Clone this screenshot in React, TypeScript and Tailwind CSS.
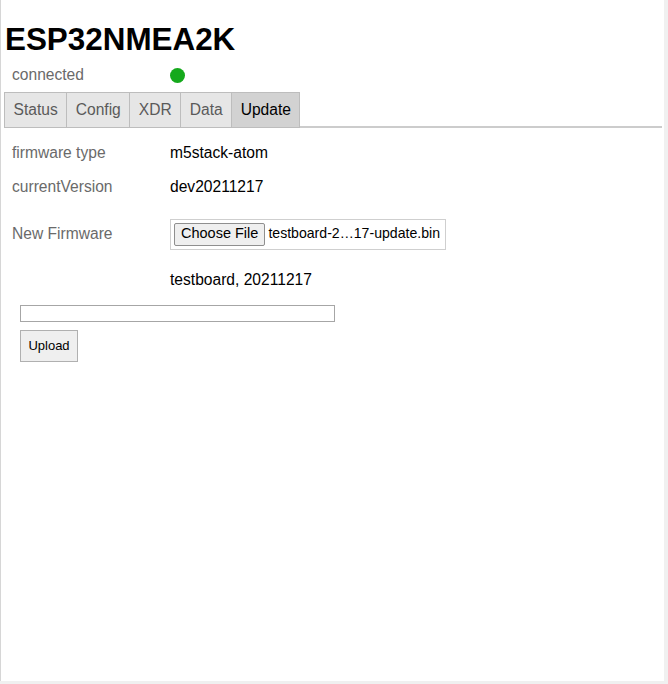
import React from "react";

const font = { fontFamily: '"Liberation Sans", Arial, sans-serif' };

function Tab({ label, active }: { label: string; active?: boolean }) {
  return (
    <div
      className={
        "-ml-px flex h-[36px] items-center border border-[#bdbdbd] px-[8.5px] text-[15.6px] first:ml-0 " +
        (active ? "bg-[#d2d2d2] text-black" : "bg-[#e6e6e6] text-[#5a5a5a]")
      }
    >
      {label}
    </div>
  );
}

function Row({ label, children, className }: { label: string; children?: React.ReactNode; className?: string }) {
  return (
    <div className={"flex h-[34px] items-center " + (className || "")}>
      <div className="w-[169px] shrink-0 pl-[11px] text-[#6a6a6a]">{label}</div>
      <div className="shrink-0 whitespace-nowrap text-black">{children}</div>
    </div>
  );
}

export default function App() {
  return (
    <div className="flex h-[684px] w-[668px] bg-[#f0f0f0]" style={font}>
      <div className="h-[681px] w-[664px] border-l border-[#d6d6d6] bg-white">
        <h1 className="pl-[4px] pt-[22px] text-[31.4px] font-bold leading-[36px] text-black">ESP32NMEA2K</h1>
        <div className="mt-[6px] flex h-[22px] items-center text-[15.6px]">
          <div className="w-[169px] pl-[11px] text-[#6a6a6a]">connected</div>
          <div className="h-[15px] w-[15px] rounded-full bg-[#15a91c]" />
        </div>
        <div className="ml-[3px] mr-[2px] mt-[6px] flex border-b-2 border-[#cccccc]">
          <div className="-mb-[2px] flex">
            <Tab label="Status" />
            <Tab label="Config" />
            <Tab label="XDR" />
            <Tab label="Data" />
            <Tab label="Update" active />
          </div>
        </div>
        <div className="mt-[8px] text-[15.6px]">
          <Row label="firmware type">m5stack-atom</Row>
          <Row label="currentVersion">dev20211217</Row>
          <Row label="New Firmware" className="mt-[13px]">
            <div className="flex h-[31px] w-[276px] items-center border border-[#cfcfcf] pl-[3px]">
              <div className="flex h-[23px] shrink-0 items-center whitespace-nowrap rounded-[2px] border border-[#8f8f8f] bg-[#efefef] px-[6px] text-[14.5px] text-black">
                Choose File
              </div>
              <span className="ml-[3px] whitespace-nowrap text-[14.1px] text-black">testboard-2…17-update.bin</span>
            </div>
          </Row>
          <Row label="" className="mt-[12px]">testboard, 20211217</Row>
        </div>
        <div className="ml-[19px] mt-[8px] h-[17px] w-[315px] border border-[#a6a6a6] bg-white" />
        <button className="ml-[19px] mt-[8px] flex h-[32px] w-[58px] items-center justify-center border border-[#b0b0b0] bg-[#efefef] text-[13px] text-black">
          Upload
        </button>
      </div>
    </div>
  );
}
